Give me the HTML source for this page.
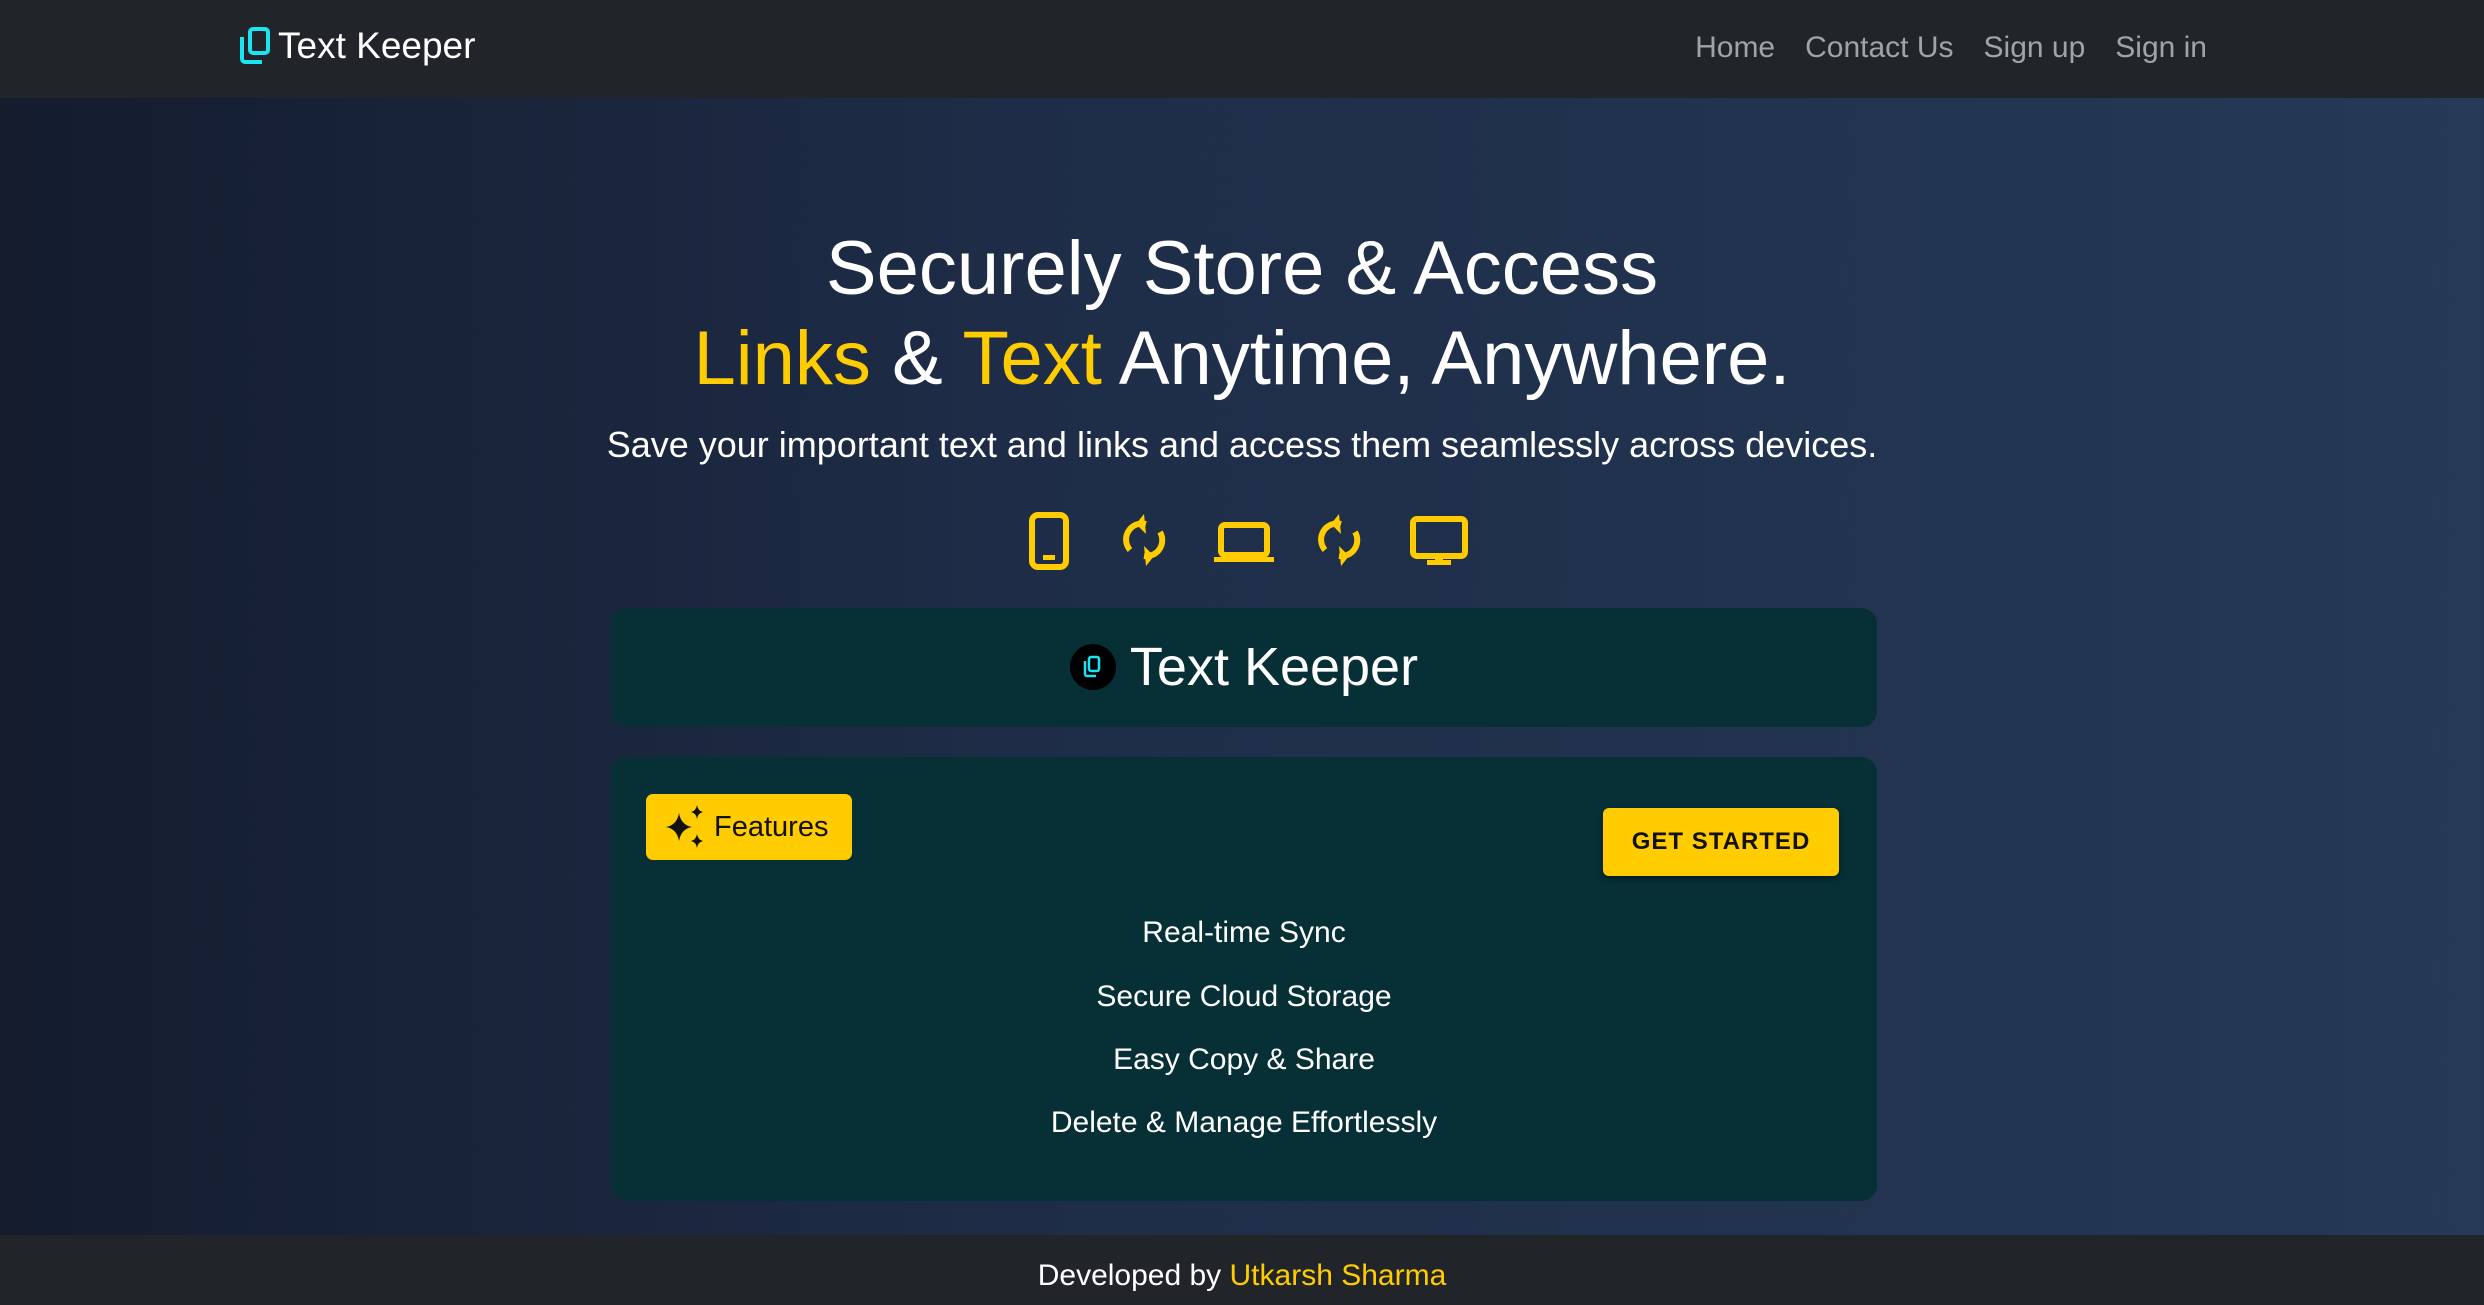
<!DOCTYPE html>
<html><head><meta charset="utf-8"><style>
*{margin:0;padding:0;box-sizing:border-box}
html,body{width:2484px;height:1305px;overflow:hidden}
body{font-family:"Liberation Sans",sans-serif;background:linear-gradient(90deg,#141c2e 0%,#1e2c47 40%,#243a56 100%);color:#fff;position:relative}
.nav{position:absolute;left:0;top:0;width:2484px;height:98px;background:#212529}
.brand{position:absolute;left:238px;top:25px;font-size:37px;color:#fff;display:flex;align-items:center;gap:6px}
.links{position:absolute;right:277px;top:31px;font-size:30px;color:#a0a4a8;display:flex;gap:30px}
.h1{position:absolute;left:0;width:2484px;text-align:center;font-size:76px;line-height:90px}
.y{color:#ffcc00}
.sub{position:absolute;left:0;width:2484px;top:424px;text-align:center;font-size:36px}
.ic{position:absolute;top:510px}
.card{position:absolute;left:611px;width:1266px;background:#072f36;border-radius:16px}
.t{position:absolute;left:0;width:100%;text-align:center;font-size:54px;top:28px;display:flex;justify-content:center;align-items:center;gap:14px}
.feat{position:absolute;left:35px;top:37px;width:206px;height:66px;background:#ffcc00;border-radius:7px;color:#111;font-size:29px;display:flex;align-items:center;padding-left:20px;gap:8px}
.gs{position:absolute;left:992px;top:51px;width:236px;height:68px;background:#ffcc00;border-radius:6px;color:#111;font-weight:bold;font-size:24px;display:flex;align-items:center;justify-content:center;letter-spacing:1px;box-shadow:0 3px 6px rgba(0,0,0,.4)}
.li{position:absolute;left:0;width:100%;text-align:center;font-size:30px}
.foot{position:absolute;left:0;top:1235px;width:2484px;height:70px;background:#212529;text-align:center;font-size:30px;line-height:82px}
</style></head><body>
<div class="nav">
 <div class="brand"><svg width="34" height="38" viewBox="0 0 34 38"><rect x="12" y="2" width="18" height="24" rx="3" fill="none" stroke="#18e4f2" stroke-width="4"/><path d="M4 10 V32 a3 3 0 0 0 3 3 H24" fill="none" stroke="#18e4f2" stroke-width="4"/></svg>Text Keeper</div>
 <div class="links"><span>Home</span><span>Contact Us</span><span>Sign up</span><span>Sign in</span></div>
</div>
<div class="h1" style="top:224px">Securely Store &amp; Access</div>
<div class="h1" style="top:314px"><span class="y">Links</span> &amp; <span class="y">Text</span> Anytime, Anywhere.</div>
<div class="sub">Save your important text and links and access them seamlessly across devices.</div>
<svg class="ic" style="left:1028px" width="44" height="60" viewBox="0 0 44 60"><rect x="4" y="5" width="34" height="52" rx="6" fill="none" stroke="#ffcc00" stroke-width="6"/><rect x="15" y="45" width="12" height="5" fill="#ffcc00"/></svg>
<svg class="ic" style="left:1122px" width="46" height="60" viewBox="0 0 46 60"><path d="M8 40 A16 16 0 0 1 24 14" fill="none" stroke="#ffcc00" stroke-width="6"/><path d="M22 4 L14 14 L24 24Z" fill="#ffcc00"/><path d="M38 22 A16 16 0 0 1 22 46" fill="none" stroke="#ffcc00" stroke-width="6"/><path d="M24 56 L32 46 L22 36Z" fill="#ffcc00"/></svg>
<svg class="ic" style="left:1213px" width="62" height="60" viewBox="0 0 62 60"><rect x="8" y="15" width="46" height="30" rx="4" fill="none" stroke="#ffcc00" stroke-width="6"/><rect x="1" y="47" width="60" height="5" fill="#ffcc00"/></svg>
<svg class="ic" style="left:1317px" width="46" height="60" viewBox="0 0 46 60"><path d="M8 40 A16 16 0 0 1 24 14" fill="none" stroke="#ffcc00" stroke-width="6"/><path d="M22 4 L14 14 L24 24Z" fill="#ffcc00"/><path d="M38 22 A16 16 0 0 1 22 46" fill="none" stroke="#ffcc00" stroke-width="6"/><path d="M24 56 L32 46 L22 36Z" fill="#ffcc00"/></svg>
<svg class="ic" style="left:1410px" width="58" height="60" viewBox="0 0 58 60"><rect x="3" y="9" width="52" height="37" rx="4" fill="none" stroke="#ffcc00" stroke-width="6"/><rect x="25" y="46" width="8" height="6" fill="#ffcc00"/><rect x="17" y="50" width="24" height="5" fill="#ffcc00"/></svg>
<div class="card" style="top:608px;height:119px">
 <div class="t"><svg width="46" height="46" viewBox="0 0 46 46"><circle cx="23" cy="23" r="23" fill="#000"/><rect x="19" y="13" width="10" height="14" rx="2" fill="none" stroke="#18e4f2" stroke-width="2.5"/><path d="M15 17 V30 a2 2 0 0 0 2 2 H26" fill="none" stroke="#18e4f2" stroke-width="2.5"/></svg>Text Keeper</div>
</div>
<div class="card" style="top:757px;height:444px">
 <div class="feat"><svg width="40" height="44" viewBox="0 0 40 44"><path d="M13 8 Q15 20 26 22 Q15 24 13 36 Q11 24 0 22 Q11 20 13 8Z" fill="#111"/><path d="M31 0 Q32 6 37 7 Q32 8 31 14 Q30 8 25 7 Q30 6 31 0Z" fill="#111"/><path d="M31 29 Q32 35 37 36 Q32 37 31 43 Q30 37 25 36 Q30 35 31 29Z" fill="#111"/></svg>Features</div>
 <div class="gs">GET STARTED</div>
 <div class="li" style="top:159px">Real-time Sync</div>
 <div class="li" style="top:223px">Secure Cloud Storage</div>
 <div class="li" style="top:286px">Easy Copy &amp; Share</div>
 <div class="li" style="top:349px">Delete &amp; Manage Effortlessly</div>
</div>
<div class="foot">Developed by <span class="y">Utkarsh Sharma</span></div>
</body></html>
